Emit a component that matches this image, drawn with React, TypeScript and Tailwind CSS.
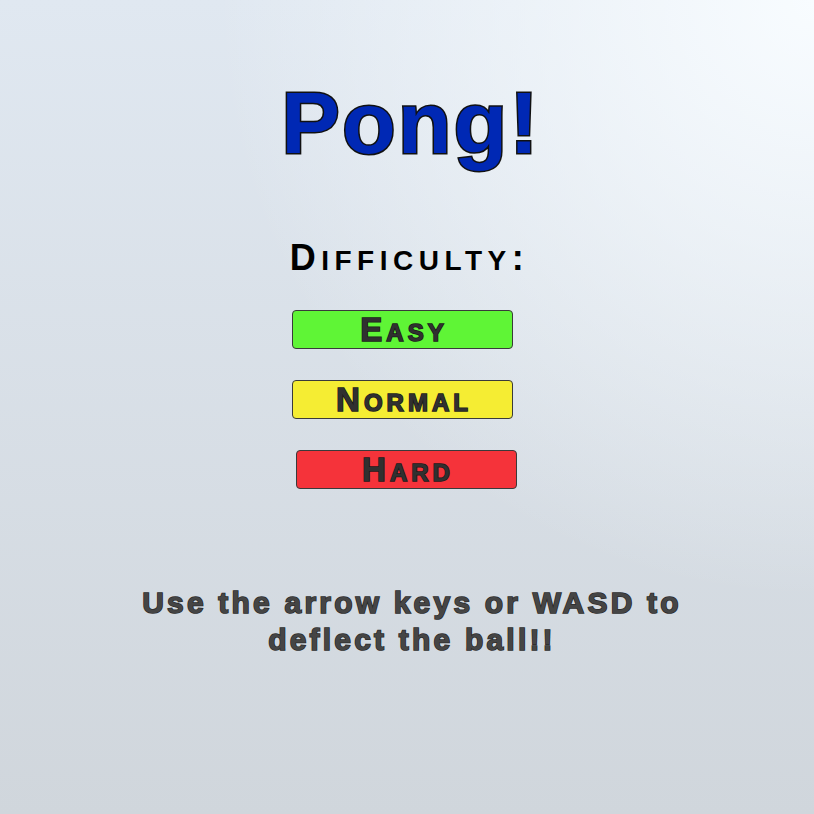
const outline = '[paint-order:stroke_fill]'

function DifficultyButton({ first, rest, color, shift }: { first: string; rest: string; color: string; shift?: boolean }) {
    return (
        <button
            className={`flex h-[39px] w-[221px] items-center justify-center rounded-[4px] border border-[#3a3a3a] pl-[4px] ${color} ${shift ? 'ml-[4px]' : ''}`}
        >
            <span
                className={`text-[33px] font-bold leading-none tracking-[4px] text-[#303030] [-webkit-text-stroke:1.5px_#1a1a1a] ${outline}`}
            >
                {first}
                <span className="text-[24px]">{rest}</span>
            </span>
        </button>
    )
}

export default function App() {
    return (
        <div className="flex h-[814px] w-full flex-col items-center bg-[radial-gradient(circle_at_100%_0%,rgba(248,252,255,1)_0%,rgba(248,252,255,0)_52%),linear-gradient(to_bottom,#e0e8f1,#d0d6dc)] font-['Liberation_Sans',Arial,sans-serif]">
            <h1
                className={`ml-[8px] mt-[79px] text-[88px] font-bold leading-none tracking-[2px] text-[#0028b4] [-webkit-text-stroke:3px_#111] ${outline}`}
            >
                Pong!
            </h1>

            <h2 className="mt-[73px] pl-[5px] text-[36px] font-bold leading-none tracking-[5.5px] text-black">
                D<span className="text-[28px]">IFFICULTY</span>:
            </h2>

            <div className="mr-[6px] mt-[34px] flex flex-col gap-[31px]">
                <DifficultyButton first="E" rest="ASY" color="bg-[#5ff536]" />
                <DifficultyButton first="N" rest="ORMAL" color="bg-[#f5ed33]" />
                <DifficultyButton first="H" rest="ARD" color="bg-[#f5333a]" shift />
            </div>

            <p
                className={`ml-[10px] mt-[95px] text-center text-[30px] font-bold leading-[37px] tracking-[3.2px] text-[#454545] [-webkit-text-stroke:1.5px_#2a2a2a] ${outline}`}
            >
                Use the arrow keys or WASD to
                <br />
                deflect the ball!!
            </p>
        </div>
    )
}
